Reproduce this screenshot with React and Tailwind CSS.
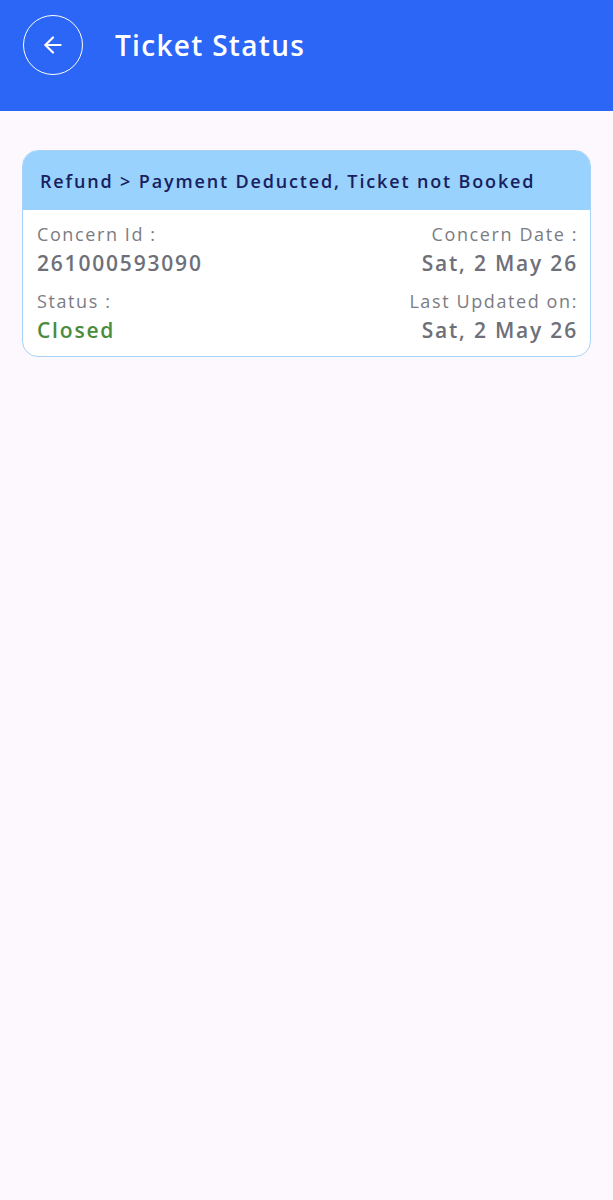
export default function App() {
  const font = { fontFamily: '"Open Sans", "Noto Sans", sans-serif' };
  const label = "text-[18px] leading-[26px] tracking-[1.6px] text-[#7b7c83]";
  const value = "text-[21px] font-semibold leading-[32px] tracking-[1.8px] text-[#6e7079]";
  return (
    <div className="min-h-[1200px] w-full bg-[#fcf8fd]" style={font}>
      <div className="flex h-[111px] items-start bg-[#2b66f6] pl-[23px] pt-[15px]">
        <div className="flex h-[60px] w-[60px] items-center justify-center rounded-full border-[1.5px] border-white">
          <svg width="26" height="26" viewBox="0 0 24 24" fill="none" stroke="white" strokeWidth="2" strokeLinecap="round" strokeLinejoin="round">
            <path d="M19 12H5" />
            <path d="M12 19l-7-7 7-7" />
          </svg>
        </div>
        <div className="ml-[32px] mt-[12px] text-[28px] font-semibold leading-[36px] tracking-[1.3px] text-white">Ticket Status</div>
      </div>
      <div className="px-[22px] pt-[39px]">
        <div className="overflow-hidden rounded-[16px] border border-[#a7d3f6] bg-white">
          <div className="flex h-[59px] items-center bg-[#99d2fd] pl-[17px] pt-[1px]">
            <span className="text-[18px] font-semibold tracking-[1.85px] text-[#18205e]">Refund &gt; Payment Deducted, Ticket not Booked</span>
          </div>
          <div className="flex justify-between pl-[14px] pr-[12px] pb-[10px] pt-[11px]">
            <div className="flex flex-col">
              <span className={label}>Concern Id :</span>
              <span className={value}>261000593090</span>
              <span className={`mt-[9px] ${label}`}>Status :</span>
              <span className="text-[21px] font-semibold leading-[32px] tracking-[1.8px] text-[#4a8c3d]">Closed</span>
            </div>
            <div className="flex flex-col items-end">
              <span className={label}>Concern Date :</span>
              <span className={value}>Sat, 2 May 26</span>
              <span className={`mt-[9px] ${label}`}>Last Updated on:</span>
              <span className={value}>Sat, 2 May 26</span>
            </div>
          </div>
        </div>
      </div>
    </div>
  );
}
